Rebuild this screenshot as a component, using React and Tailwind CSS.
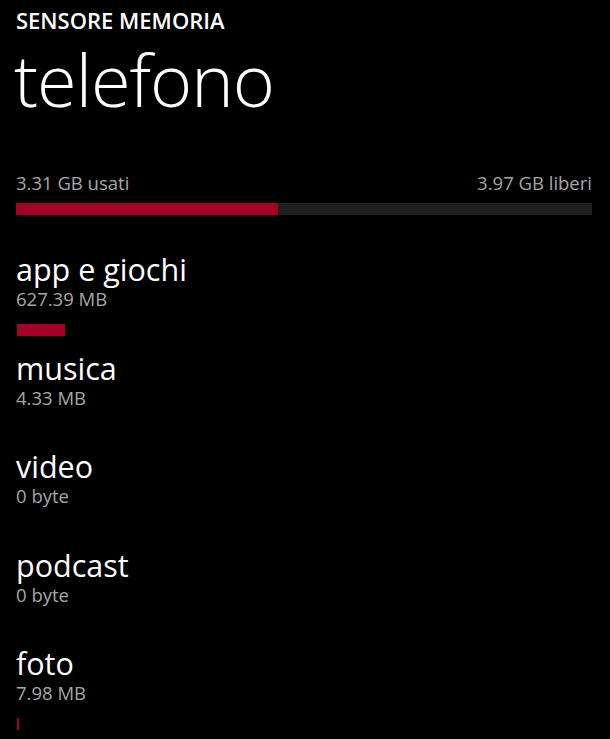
export default function App() {
  const items = [
    { name: "app e giochi", size: "627.39 MB", w: 48 },
    { name: "musica", size: "4.33 MB", w: 0 },
    { name: "video", size: "0 byte", w: 0 },
    { name: "podcast", size: "0 byte", w: 0 },
    { name: "foto", size: "7.98 MB", w: 2 },
  ];
  return (
    <div
      className="w-[610px] h-[739px] bg-black text-white overflow-hidden pl-[16px] pr-[18px]"
      style={{ fontFamily: '"Open Sans", "Noto Sans", sans-serif' }}
    >
      <div className="pt-[6px] text-[22px] leading-[28px] font-semibold">SENSORE MEMORIA</div>
      <div className="mt-[0px] text-[72px] leading-[90px] font-light tracking-[-1px] -ml-[2px]">telefono</div>
      <div className="mt-[48px] flex justify-between text-[18.5px] leading-[22px] text-[#a6a6a6]">
        <span>3.31 GB usati</span>
        <span>3.97 GB liberi</span>
      </div>
      <div className="mt-[9px] h-[12px] bg-[#1f1f1f] flex">
        <div className="h-full w-[262px] bg-[#a50026]" />
      </div>
      <div className="mt-[35px] flex flex-col">
        {items.map((it) => (
          <div key={it.name} className="h-[98.5px] flex flex-col">
            <div className="text-[30.5px] leading-[38px] text-white">{it.name}</div>
            <div className="text-[18.5px] leading-[22px] text-[#a6a6a6]">{it.size}</div>
            <div className="mt-[14px] h-[12px] pl-[1px]">
              <div className="h-full bg-[#a50026]" style={{ width: it.w }} />
            </div>
          </div>
        ))}
      </div>
    </div>
  );
}
